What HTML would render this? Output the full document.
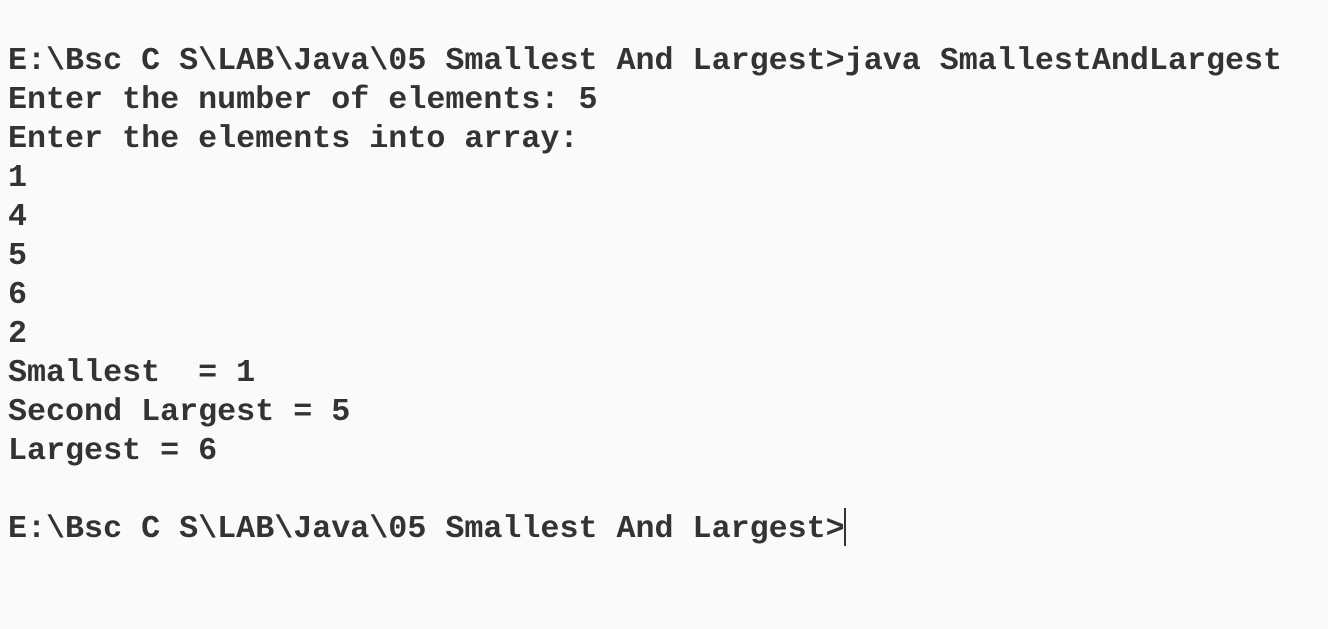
<!DOCTYPE html>
<html><head><meta charset="utf-8"><style>
html,body{margin:0;padding:0;background:#fafafa;width:1328px;height:629px;overflow:hidden}
pre{margin:0;position:absolute;left:8px;top:42px;font-family:"Liberation Mono",monospace;font-weight:bold;font-size:31.7px;line-height:39px;color:#333;white-space:pre}
.cur{position:absolute;left:844px;top:508px;width:1.5px;height:38px;background:#333}
</style></head><body>
<pre>E:\Bsc C S\LAB\Java\05 Smallest And Largest&gt;java SmallestAndLargest
Enter the number of elements: 5
Enter the elements into array:
1
4
5
6
2
Smallest  = 1
Second Largest = 5
Largest = 6

E:\Bsc C S\LAB\Java\05 Smallest And Largest&gt;</pre>
<div class="cur"></div>
</body></html>
